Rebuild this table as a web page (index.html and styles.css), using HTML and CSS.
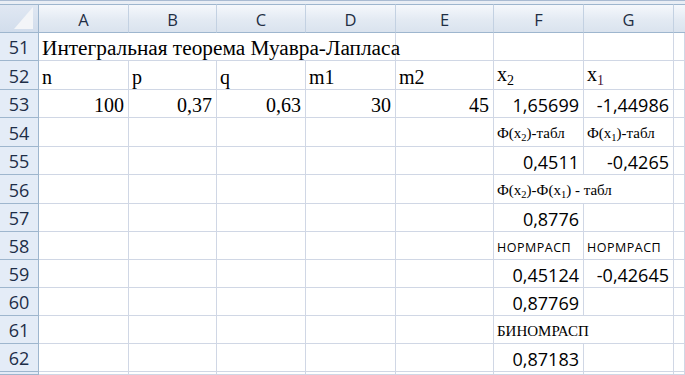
FILE: index.html
```html
<!DOCTYPE html>
<html>
<head>
<meta charset="utf-8">
<link rel="stylesheet" href="styles.css">
</head>
<body>
<div class="topbar"></div>
<div class="sheet">
  <div class="corner"><svg class="tri" width="20" height="22" viewBox="0 0 20 22"><polygon points="19,0 19,22 0,22" fill="#f3f5f8"/></svg></div>
  <div class="ch">A</div><div class="ch">B</div><div class="ch">C</div><div class="ch">D</div><div class="ch">E</div><div class="ch">F</div><div class="ch">G</div><div class="ch last"></div>

  <div class="rh">51</div>
  <div class="c t title span4">Интегральная теорема Муавра-Лапласа</div><div class="c"></div><div class="c"></div><div class="c"></div><div class="c"></div>

  <div class="rh">52</div>
  <div class="c t">n</div><div class="c t">p</div><div class="c t">q</div><div class="c t">m1</div><div class="c t">m2</div><div class="c t"><span>x<span class="sub">2</span></span></div><div class="c t"><span>x<span class="sub s1">1</span></span></div><div class="c"></div>

  <div class="rh">53</div>
  <div class="c t r">100</div><div class="c t r">0,37</div><div class="c t r">0,63</div><div class="c t r">30</div><div class="c t r">45</div><div class="c n r">1,65699</div><div class="c n r">-1,44986</div><div class="c"></div>

  <div class="rh">54</div>
  <div class="c"></div><div class="c"></div><div class="c"></div><div class="c"></div><div class="c"></div><div class="c s"><span>Ф(x<span class="sub">2</span>)-табл</span></div><div class="c s"><span>Ф(x<span class="sub">1</span>)-табл</span></div><div class="c"></div>

  <div class="rh">55</div>
  <div class="c"></div><div class="c"></div><div class="c"></div><div class="c"></div><div class="c"></div><div class="c n r">0,4511</div><div class="c n r">-0,4265</div><div class="c"></div>

  <div class="rh">56</div>
  <div class="c"></div><div class="c"></div><div class="c"></div><div class="c"></div><div class="c"></div><div class="c s span2"><span>Ф(x<span class="sub">2</span>)-Ф(x<span class="sub">1</span>) - табл</span></div><div class="c"></div>

  <div class="rh">57</div>
  <div class="c"></div><div class="c"></div><div class="c"></div><div class="c"></div><div class="c"></div><div class="c n r">0,8776</div><div class="c"></div><div class="c"></div>

  <div class="rh">58</div>
  <div class="c"></div><div class="c"></div><div class="c"></div><div class="c"></div><div class="c"></div><div class="c k">НОРМРАСП</div><div class="c k">НОРМРАСП</div><div class="c"></div>

  <div class="rh">59</div>
  <div class="c"></div><div class="c"></div><div class="c"></div><div class="c"></div><div class="c"></div><div class="c n r">0,45124</div><div class="c n r">-0,42645</div><div class="c"></div>

  <div class="rh">60</div>
  <div class="c"></div><div class="c"></div><div class="c"></div><div class="c"></div><div class="c"></div><div class="c n r">0,87769</div><div class="c"></div><div class="c"></div>

  <div class="rh">61</div>
  <div class="c"></div><div class="c"></div><div class="c"></div><div class="c"></div><div class="c"></div><div class="c s span2">БИНОМРАСП</div><div class="c"></div>

  <div class="rh">62</div>
  <div class="c"></div><div class="c"></div><div class="c"></div><div class="c"></div><div class="c"></div><div class="c n r">0,87183</div><div class="c"></div><div class="c"></div>

  <div class="rh"></div>
  <div class="c"></div><div class="c"></div><div class="c"></div><div class="c"></div><div class="c"></div><div class="c"></div><div class="c"></div><div class="c"></div>
</div>
</body>
</html>
```

FILE: styles.css
```css
html, body {
  margin: 0;
  padding: 0;
  background: #ffffff;
  overflow: hidden;
}

.topbar {
  height: 3px;
  border-top: 1px solid #a9bbd2;
  background: #e9eef5;
}

.sheet {
  display: grid;
  grid-template-columns: 39px 90px 88px 89px 90px 98px 90px 90px 1fr;
  grid-template-rows: 29px 28px 29px 28px 29px 28px 29px 28px 28px 28px 28px 28px 28px 3px;
  width: 685px;
}

.corner {
  box-sizing: border-box;
  border-top: 1px solid #9eb6ce;
  border-bottom: 1px solid #9eb6ce;
  border-right: 1px solid #9eb6ce;
  background: linear-gradient(#e0e8f3, #d2ddec);
  position: relative;
}

.tri {
  position: absolute;
  right: 4px;
  bottom: 3px;
}

.ch {
  box-sizing: border-box;
  border-top: 1px solid #9eb6ce;
  border-bottom: 1px solid #9eb6ce;
  border-right: 1px solid #c3d1e2;
  background: linear-gradient(#f5f8fc, #e3eaf3 55%, #dae3ee);
  display: flex;
  align-items: center;
  justify-content: center;
  font-family: "Open Sans", "Liberation Sans", sans-serif;
  font-size: 16.5px;
  color: #1f2e44;
  padding-top: 1px;
}

.ch.last {
  border-right: none;
}

.rh {
  box-sizing: border-box;
  border-right: 1px solid #9eb6ce;
  border-bottom: 1px solid #9eb6ce;
  background: #e4ecf7;
  display: flex;
  align-items: center;
  justify-content: center;
  font-family: "Open Sans", "Liberation Sans", sans-serif;
  font-size: 18px;
  color: #1e2e48;
  padding-top: 1px;
}

.c {
  box-sizing: border-box;
  border-right: 1px solid #d0d7e5;
  border-bottom: 1px solid #d0d7e5;
  display: flex;
  align-items: flex-end;
  justify-content: flex-start;
  padding: 0 3px 2px 3px;
  white-space: nowrap;
  color: #000000;
  min-width: 0;
  overflow: visible;
}

.span4 {
  grid-column: span 4;
}

.span2 {
  grid-column: span 2;
}

.r {
  justify-content: flex-end;
  padding-right: 4px;
}

.t {
  font-family: "Liberation Serif", "Times New Roman", serif;
  font-size: 20px;
  line-height: 20px;
}

.title {
  font-size: 21.3px;
}

.n {
  font-family: "Open Sans", "Liberation Sans", sans-serif;
  font-size: 18px;
  line-height: 18px;
  padding-bottom: 3px;
}

.s {
  font-family: "Liberation Serif", "Times New Roman", serif;
  font-size: 15px;
  line-height: 15px;
  padding-bottom: 4px;
}

.k {
  font-family: "Open Sans", "Liberation Sans", sans-serif;
  font-size: 12.5px;
  line-height: 12px;
  letter-spacing: 0.5px;
  padding-bottom: 5px;
}

.sub {
  font-size: 0.7em;
  position: relative;
  top: 0.3em;
}

.s1 {
  color: #4a1238;
}
```
